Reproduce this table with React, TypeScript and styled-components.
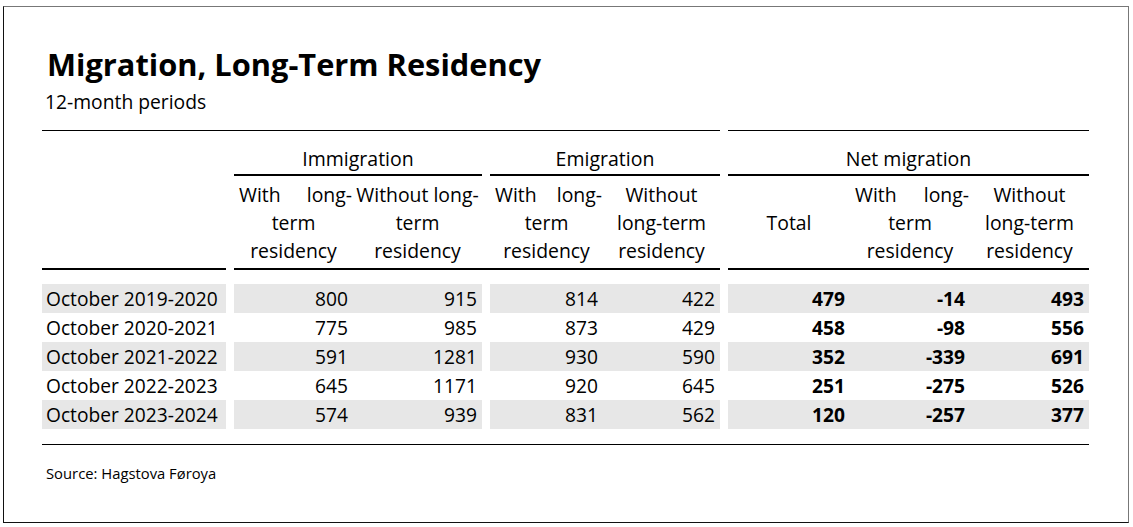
import React from "react";
import styled, { createGlobalStyle } from "styled-components";

const Global = createGlobalStyle`
  html, body { margin: 0; padding: 0; background: #fff; }
  body { font-family: "Open Sans", "Liberation Sans", sans-serif; color: #000; }
`;

const GROUP_COLS = "184px 248px 230px 361px";

const Card = styled.div`
  box-sizing: border-box;
  width: 1126px;
  height: 517px;
  margin: 6px 0 0 3px;
  border-style: solid;
  border-width: 1px;
  border-color: #777 #777 #111 #111;
  padding: 37px 0 0 38px;
`;

const Title = styled.h1`
  margin: 0 0 0 5px;
  font-size: 30.8px;
  line-height: 40px;
  font-weight: 700;
  letter-spacing: 0;
`;

const Subtitle = styled.div`
  margin: 5px 0 0 3px;
  font-size: 19.3px;
  line-height: 26px;
`;

const Table = styled.div`
  width: 1047px;
  margin-top: 15px;
`;

const Rule = styled.div<{ $cols: string; $weight: number }>`
  display: grid;
  grid-template-columns: ${(p) => p.$cols};
  column-gap: 8px;
  & > span {
    display: block;
    border-top: ${(p) => p.$weight}px solid #000;
  }
`;

const Row = styled.div`
  display: grid;
  grid-template-columns: ${GROUP_COLS};
  column-gap: 8px;
`;

const GroupTitle = styled.div<{ $line?: boolean }>`
  padding: 14px 0 1px;
  font-size: 19.5px;
  line-height: 28px;
  text-align: center;
  border-bottom: 2px solid ${(p) => (p.$line ? "#000" : "transparent")};
`;

const SubGrid = styled.div<{ $cols: string; $stripe?: boolean }>`
  display: grid;
  grid-template-columns: ${(p) => p.$cols};
  background: ${(p) => (p.$stripe ? "#e7e7e7" : "transparent")};
`;

const HeadRow = styled(Row)`
  height: 94px;
  margin-bottom: 14px;
`;

const HeadCell = styled.div`
  display: flex;
  flex-direction: column;
  justify-content: center;
  padding: 0 1px 0 5px;
  font-size: 19.4px;
  line-height: 28px;
  white-space: nowrap;
`;

const HeadLine = styled.div<{ $spread?: boolean }>`
  text-align: ${(p) => (p.$spread ? "justify" : "center")};
  text-align-last: ${(p) => (p.$spread ? "justify" : "center")};
  margin-left: ${(p) => (p.$spread ? "0" : "-4px")};
`;

const StubCell = styled.div<{ $stripe?: boolean }>`
  padding: 0 4px;
  font-size: 19.2px;
  line-height: 29px;
  background: ${(p) => (p.$stripe ? "#e7e7e7" : "transparent")};
  white-space: nowrap;
`;

const NumCell = styled.div<{ $bold?: boolean }>`
  padding: 0 5px 0 0;
  font-size: 19.2px;
  line-height: 29px;
  text-align: right;
  font-weight: ${(p) => (p.$bold ? 700 : 400)};
`;

const Source = styled.div`
  margin: 18px 0 0 4px;
  font-size: 14.8px;
  line-height: 20px;
`;

const IMM = "119px 129px";
const EMI = "113px 117px";
const NET = "122px 120px 119px";

type Head = { lines: { t: string; spread?: boolean }[] };

const WITH: Head = { lines: [{ t: "With long-", spread: true }, { t: "term" }, { t: "residency" }] };
const WITHOUT_A: Head = { lines: [{ t: "Without long-" }, { t: "term" }, { t: "residency" }] };
const WITHOUT_B: Head = { lines: [{ t: "Without" }, { t: "long-term" }, { t: "residency" }] };
const TOTAL: Head = { lines: [{ t: "Total" }] };

const rows: { label: string; v: number[] }[] = [
  { label: "October 2019-2020", v: [800, 915, 814, 422, 479, -14, 493] },
  { label: "October 2020-2021", v: [775, 985, 873, 429, 458, -98, 556] },
  { label: "October 2021-2022", v: [591, 1281, 930, 590, 352, -339, 691] },
  { label: "October 2022-2023", v: [645, 1171, 920, 645, 251, -275, 526] },
  { label: "October 2023-2024", v: [574, 939, 831, 562, 120, -257, 377] },
];

function HeadGroup({ cols, heads }: { cols: string; heads: Head[] }) {
  return (
    <SubGrid $cols={cols}>
      {heads.map((h, i) => (
        <HeadCell key={i}>
          {h.lines.map((l, j) => (
            <HeadLine key={j} $spread={l.spread}>
              {l.t}
            </HeadLine>
          ))}
        </HeadCell>
      ))}
    </SubGrid>
  );
}

export default function App() {
  return (
    <>
      <Global />
      <Card>
        <Title>Migration, Long-Term Residency</Title>
        <Subtitle>12-month periods</Subtitle>
        <Table>
          <Rule $cols="1fr 361px" $weight={1}>
            <span />
            <span />
          </Rule>
          <Row>
            <GroupTitle />
            <GroupTitle $line>Immigration</GroupTitle>
            <GroupTitle $line>Emigration</GroupTitle>
            <GroupTitle $line>Net migration</GroupTitle>
          </Row>
          <HeadRow>
            <div />
            <HeadGroup cols={IMM} heads={[WITH, WITHOUT_A]} />
            <HeadGroup cols={EMI} heads={[WITH, WITHOUT_B]} />
            <HeadGroup cols={NET} heads={[TOTAL, WITH, WITHOUT_B]} />
          </HeadRow>
          <Rule $cols="184px 1fr 361px" $weight={2} style={{ marginTop: -16, marginBottom: 14 }}>
            <span />
            <span />
            <span />
          </Rule>
          {rows.map((r, i) => {
            const stripe = i % 2 === 0;
            return (
              <Row key={r.label}>
                <StubCell $stripe={stripe}>{r.label}</StubCell>
                <SubGrid $cols={IMM} $stripe={stripe}>
                  <NumCell>{r.v[0]}</NumCell>
                  <NumCell>{r.v[1]}</NumCell>
                </SubGrid>
                <SubGrid $cols={EMI} $stripe={stripe}>
                  <NumCell>{r.v[2]}</NumCell>
                  <NumCell>{r.v[3]}</NumCell>
                </SubGrid>
                <SubGrid $cols={NET} $stripe={stripe}>
                  <NumCell $bold>{r.v[4]}</NumCell>
                  <NumCell $bold>{r.v[5]}</NumCell>
                  <NumCell $bold>{r.v[6]}</NumCell>
                </SubGrid>
              </Row>
            );
          })}
          <Rule $cols="1fr" $weight={1} style={{ marginTop: 15 }}>
            <span />
          </Rule>
        </Table>
        <Source>Source: Hagstova Føroya</Source>
      </Card>
    </>
  );
}
